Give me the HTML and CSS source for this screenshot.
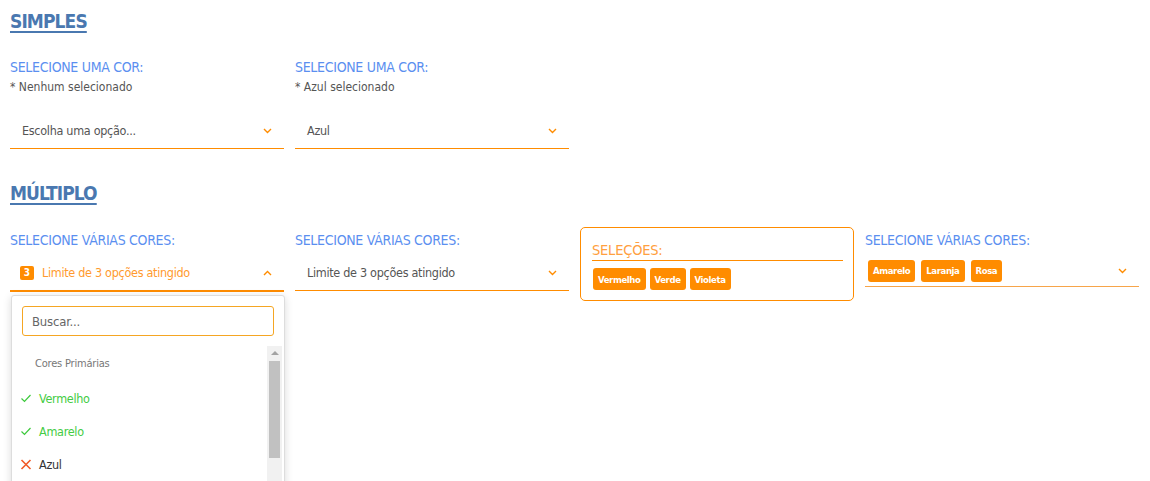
FILE: index.html
```html
<!DOCTYPE html>
<html lang="pt">
<head>
<meta charset="utf-8">
<link rel="stylesheet" href="styles.css">
</head>
<body>
<main class="page">
  <h2 class="section-title">SIMPLES</h2>
  <div class="row">
    <div class="field">
      <div class="label">SELECIONE UMA COR:</div>
      <div class="hint">* Nenhum selecionado</div>
      <div class="select">
        <span class="value">Escolha uma opção...</span>
        <svg class="chev" width="9" height="6" viewBox="0 0 9 6"><path d="M1 1 L4.5 4.5 L8 1" fill="none" stroke="#ff8c00" stroke-width="1.4"/></svg>
      </div>
    </div>
    <div class="field">
      <div class="label">SELECIONE UMA COR:</div>
      <div class="hint">* Azul selecionado</div>
      <div class="select">
        <span class="value">Azul</span>
        <svg class="chev" width="9" height="6" viewBox="0 0 9 6"><path d="M1 1 L4.5 4.5 L8 1" fill="none" stroke="#ff8c00" stroke-width="1.4"/></svg>
      </div>
    </div>
  </div>

  <h2 class="section-title second">MÚLTIPLO</h2>
  <div class="row">
    <div class="field">
      <div class="label">SELECIONE VÁRIAS CORES:</div>
      <div class="select open">
        <span class="count">3</span>
        <span class="value active">Limite de 3 opções atingido</span>
        <svg class="chev" width="9" height="6" viewBox="0 0 9 6"><path d="M1 5 L4.5 1.5 L8 5" fill="none" stroke="#ff8c00" stroke-width="1.4"/></svg>
        <div class="dropdown">
          <div class="search"><span>Buscar...</span></div>
          <div class="list">
            <div class="options">
              <div class="group">Cores Primárias</div>
              <div class="opt sel"><svg width="11" height="9" viewBox="0 0 11 9"><path d="M1 4.5 L4 7.5 L10 1" fill="none" stroke="#3cc93c" stroke-width="1.2"/></svg><span>Vermelho</span></div>
              <div class="opt sel"><svg width="11" height="9" viewBox="0 0 11 9"><path d="M1 4.5 L4 7.5 L10 1" fill="none" stroke="#3cc93c" stroke-width="1.2"/></svg><span>Amarelo</span></div>
              <div class="opt no"><svg width="11" height="11" viewBox="0 0 11 11"><path d="M1 1 L10 10 M10 1 L1 10" fill="none" stroke="#f05a28" stroke-width="1.6"/></svg><span>Azul</span></div>
            </div>
            <div class="scrollbar">
              <div class="arrow"></div>
              <div class="thumb"></div>
            </div>
          </div>
        </div>
      </div>
    </div>
    <div class="field">
      <div class="label">SELECIONE VÁRIAS CORES:</div>
      <div class="select">
        <span class="value">Limite de 3 opções atingido</span>
        <svg class="chev" width="9" height="6" viewBox="0 0 9 6"><path d="M1 1 L4.5 4.5 L8 1" fill="none" stroke="#ff8c00" stroke-width="1.4"/></svg>
      </div>
    </div>
    <div class="field">
      <div class="box">
        <div class="box-title">SELEÇÕES:</div>
        <div class="chips">
          <span class="chip">Vermelho</span>
          <span class="chip">Verde</span>
          <span class="chip">Violeta</span>
        </div>
      </div>
    </div>
    <div class="field">
      <div class="label">SELECIONE VÁRIAS CORES:</div>
      <div class="select thin">
        <div class="chips">
          <span class="chip">Amarelo</span>
          <span class="chip">Laranja</span>
          <span class="chip">Rosa</span>
        </div>
        <svg class="chev" width="9" height="6" viewBox="0 0 9 6"><path d="M1 1 L4.5 4.5 L8 1" fill="none" stroke="#ff8c00" stroke-width="1.4"/></svg>
      </div>
    </div>
  </div>
</main>
</body>
</html>
```

FILE: styles.css
```css
* { box-sizing: border-box; }
html, body { margin: 0; padding: 0; background: #fff; }
body {
  font-family: "DejaVu Sans Condensed", "DejaVu Sans", sans-serif;
  color: #555;
  overflow: hidden;
  height: 481px;
}
.page { padding: 8px 10px 0 10px; }
.section-title {
  margin: 0;
  font-size: 19px;
  font-weight: bold;
  letter-spacing: -0.9px;
  color: #4a78b0;
  text-decoration: underline;
  text-decoration-thickness: 2px;
  text-underline-offset: 3px;
  line-height: 26px;
  display: inline-block;
}
.section-title.second { margin-top: 31px; }
.row {
  display: flex;
  gap: 11px;
  margin-top: 24px;
  align-items: flex-start;
}
.section-title.second + .row { margin-top: 25px; }
.field { width: 274px; flex: none; }
.label {
  font-size: 14px;
  color: #5b8ff0;
  line-height: 18px;
  letter-spacing: -0.3px;
}
.hint {
  font-size: 12px;
  color: #555;
  line-height: 16px;
  margin-top: 3px;
}
.select {
  position: relative;
  display: flex;
  align-items: center;
  height: 36px;
  margin-top: 8px;
  padding: 0 12px 0 12px;
  border-bottom: 1px solid #ff8c00;
}
.hint + .select { margin-top: 18px; }
.label + .select { margin-top: 6px; }
.select.open { border-bottom-width: 2px; height: 37px; padding-left: 10px; }
.select.thin { border-bottom-color: #f7a54a; height: 32px; padding-left: 3px; margin-top: 6px; }
.value { font-size: 12.5px; color: #555; flex: 1; letter-spacing: -0.3px; }
.value.active { color: #ff9a2e; }
.chev { flex: none; }
.count {
  width: 14px; height: 14px;
  background: #ff8c00;
  color: #fff;
  border-radius: 2px;
  font-size: 10px;
  font-weight: bold;
  display: flex; align-items: center; justify-content: center;
  margin-right: 8px;
}
.dropdown {
  position: absolute;
  left: 1px; top: 40px;
  width: 274px;
  height: 200px;
  background: #fff;
  border: 1px solid #ddd;
  border-radius: 3px;
  box-shadow: 0 2px 8px rgba(0,0,0,0.15);
  padding: 10px 0 0 0;
}
.search {
  margin: 0 10px;
  height: 30px;
  border: 1px solid #f5a623;
  border-radius: 3px;
  display: flex; align-items: center;
  padding-left: 9px;
  font-size: 13px;
  color: #666;
  letter-spacing: -0.2px;
}
.list { display: flex; margin-top: 10px; }
.options { flex: 1; padding-top: 9px; }
.group { font-size: 11px; color: #777; padding-left: 23px; line-height: 18px; letter-spacing: -0.2px; }
.opt { display: flex; align-items: center; height: 33px; padding-left: 8px; font-size: 12.5px; letter-spacing: -0.3px; }
.group + .opt { margin-top: 9px; }
.opt svg { width: 12px; margin-right: 7px; }
.opt.sel { color: #44cc44; }
.opt.no { color: #333; }
.scrollbar { width: 15px; margin-right: 2px; background: #f1f1f1; height: 140px; padding: 0 1px; }
.arrow { width: 0; height: 0; margin: 5px auto 6px; border-left: 4px solid transparent; border-right: 4px solid transparent; border-bottom: 4px solid #a3a3a3; }
.thumb { height: 97px; background: #c1c1c1; margin: 0 1px; }
.box {
  border: 1px solid #ff8c00;
  border-radius: 5px;
  height: 74px;
  margin-top: -4px;
  padding: 13px 10px 0 11px;
}
.box-title {
  font-size: 14.5px;
  color: #ffa040;
  line-height: 18px;
  letter-spacing: -0.2px;
  border-bottom: 1px solid #ff8c00;
  padding-bottom: 1px;
}
.chips { display: flex; gap: 4px; }
.box .chips { margin-top: 7px; padding-left: 1px; }
.select.thin .chips { flex: 1; gap: 6px; }
.chip {
  background: #ff8c00;
  color: #fff;
  font-weight: bold;
  font-size: 9.5px;
  letter-spacing: -0.4px;
  border-radius: 3px;
  height: 22px;
  padding: 0 5px;
  display: inline-flex;
  align-items: center;
}
```
